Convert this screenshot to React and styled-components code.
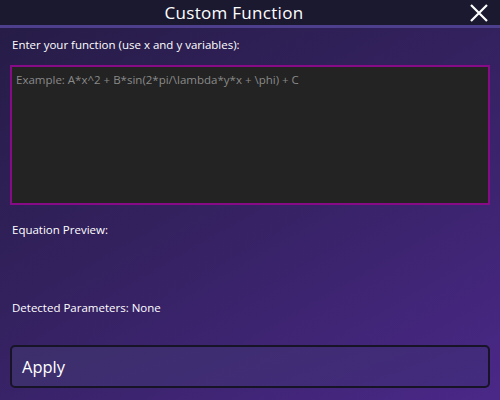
import React, { useState } from 'react';
import styled, { createGlobalStyle } from 'styled-components';

const GlobalStyle = createGlobalStyle`
  html, body {
    margin: 0;
    padding: 0;
    width: 500px;
    height: 400px;
    overflow: hidden;
    font-family: "Open Sans", "Noto Sans", sans-serif;
  }
`;

const Window = styled.div`
  width: 500px;
  height: 400px;
  display: flex;
  flex-direction: column;
  background: linear-gradient(150deg, #251c45 0%, #33215e 45%, #4a2888 100%);
  color: #ffffff;
`;

const TitleBar = styled.header`
  height: 25px;
  flex-shrink: 0;
  background: #1b1930;
  border-bottom: 3px solid #4d3f8c;
  display: flex;
  align-items: center;
  padding-right: 10px;
`;

const Title = styled.h1`
  flex: 1;
  margin: 0;
  text-align: center;
  font-size: 17px;
  font-weight: 400;
  letter-spacing: 0.3px;
  color: #ffffff;
`;

const CloseButton = styled.button`
  width: 22px;
  height: 22px;
  padding: 0;
  border: none;
  background: transparent;
  display: flex;
  align-items: center;
  justify-content: center;
  cursor: pointer;
`;

const Body = styled.main`
  flex: 1;
  display: flex;
  flex-direction: column;
  padding: 9px 10px 12px;
`;

const Label = styled.p`
  margin: 0;
  padding-left: 2px;
  font-size: 11.5px;
  line-height: 16px;
  color: #ffffff;
`;

const FunctionInput = styled.textarea`
  margin-top: 12px;
  height: 140px;
  box-sizing: border-box;
  resize: none;
  background: #232323;
  border: 2px solid #870a87;
  color: #dddddd;
  font-family: "Open Sans", "Noto Sans", sans-serif;
  font-size: 11.5px;
  padding: 5px 4px;
  outline: none;

  &::placeholder {
    color: #8a8a8a;
  }
`;

const Section = styled.div`
  margin-top: ${p => p.$gap}px;
`;

const ApplyButton = styled.button`
  margin-top: auto;
  height: 43px;
  box-sizing: border-box;
  border: 2px solid #171428;
  border-radius: 5px;
  background: linear-gradient(160deg, #3c2f6a 0%, #432a7e 100%);
  color: #ffffff;
  font-family: "Open Sans", "Noto Sans", sans-serif;
  font-size: 16.5px;
  text-align: left;
  padding: 0 10px;
  cursor: pointer;
`;

export default function App() {
  const [expr, setExpr] = useState('');
  return (
    <Window>
      <GlobalStyle />
      <TitleBar>
        <Title>Custom Function</Title>
        <CloseButton aria-label="close">
          <svg width="18" height="18" viewBox="0 0 18 18">
            <path d="M1 1 L17 17 M17 1 L1 17" stroke="#ffffff" strokeWidth="2.2" />
          </svg>
        </CloseButton>
      </TitleBar>
      <Body>
        <Label>Enter your function (use x and y variables):</Label>
        <FunctionInput
          value={expr}
          onChange={e => setExpr(e.target.value)}
          placeholder="Example: A*x^2 + B*sin(2*pi/\lambda*y*x + \phi) + C"
        />
        <Section $gap={17}>
          <Label>Equation Preview:</Label>
        </Section>
        <Section $gap={62}>
          <Label>Detected Parameters: None</Label>
        </Section>
        <ApplyButton type="button">Apply</ApplyButton>
      </Body>
    </Window>
  );
}
